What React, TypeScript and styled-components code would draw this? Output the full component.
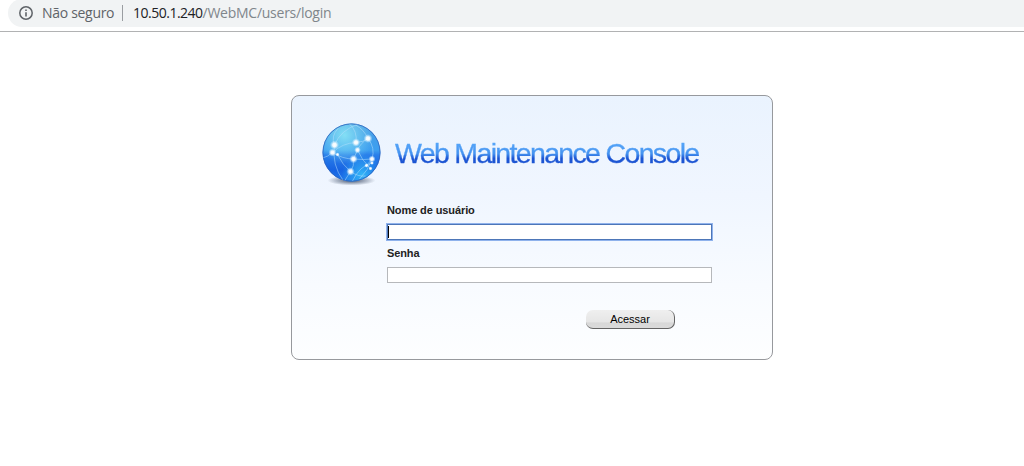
import React from "react";
import styled, { createGlobalStyle } from "styled-components";

const GlobalStyle = createGlobalStyle`
  body {
    margin: 0;
    background: #fff;
    font-family: "Liberation Sans", Arial, sans-serif;
    overflow: hidden;
  }
`;

const Page = styled.div`
  display: flex;
  flex-direction: column;
  height: 466px;
  overflow: hidden;
`;

const BrowserBar = styled.header`
  box-sizing: border-box;
  height: 32px;
  padding-left: 8px;
  border-bottom: 1px solid #b1b2b3;
`;

const AddressField = styled.div`
  display: flex;
  align-items: center;
  box-sizing: border-box;
  height: 28px;
  margin-top: -1px;
  padding-left: 11px;
  border-radius: 14px 0 0 14px;
  background: #f1f3f4;
  font-family: "Open Sans", "Noto Sans", sans-serif;
  font-size: 14px;
  line-height: 28px;
  white-space: nowrap;
`;

const SecurityText = styled.span`
  margin-left: 9px;
  width: 71px;
  color: #5f6368;
  letter-spacing: -0.3px;
`;

const Divider = styled.span`
  width: 1px;
  height: 16px;
  margin: 0 10px 0 9px;
  background: #9a9da1;
`;

const Host = styled.span`
  color: #202124;
  letter-spacing: -0.5px;
`;

const Path = styled.span`
  color: #80868b;
  letter-spacing: -0.26px;
`;

const Main = styled.main`
  padding: 63px 0 0 291px;
`;

const Panel = styled.form`
  box-sizing: border-box;
  width: 482px;
  height: 265px;
  padding: 25px 0 0 29px;
  border: 1px solid #97999d;
  border-radius: 8px;
  background: linear-gradient(#eaf3fe 0%, #f0f6ff 38%, #f8fbff 72%, #fdfeff 100%);
`;

const Brand = styled.div`
  display: flex;
  height: 68px;
`;

const Title = styled.h1`
  margin: 15px 0 0 12px;
  height: 34px;
  font-size: 28.5px;
  line-height: 34px;
  font-weight: 400;
  letter-spacing: -1.66px;
  white-space: nowrap;
  color: transparent;
  -webkit-text-stroke: 0.35px transparent;
  background: linear-gradient(#58a8fa 15%, #4593f0 52%, #1c55d3 66%, #1c55d3 80%, #4a8ded 100%);
  background-clip: text;
  -webkit-background-clip: text;
`;

const Fields = styled.div`
  display: flex;
  flex-direction: column;
  width: 326px;
  margin: 14px 0 0 66px;
`;

const Label = styled.label`
  height: 15px;
  color: #222;
  font-size: 11px;
  font-weight: 700;
  line-height: 15px;
  letter-spacing: -0.1px;
`;

const Field = styled.div<{ $active?: boolean }>`
  display: flex;
  align-items: center;
  box-sizing: border-box;
  width: 325px;
  height: 16px;
  margin: 6px 0 6px;
  border: 1px solid ${(p) => (p.$active ? "#4d76b8" : "#b6b8bb")};
  background: #fff;
  box-shadow: ${(p) => (p.$active ? "0 0 0 1px #8fb2ec" : "none")};
`;

const Caret = styled.span`
  width: 1px;
  height: 12px;
  background: #000;
`;

const SubmitButton = styled.button`
  display: block;
  box-sizing: border-box;
  width: 89px;
  height: 19px;
  margin: 21px 0 0 265px;
  padding: 0;
  border: 0 solid #646464;
  border-width: 0 1px 1px 0;
  border-radius: 7px;
  background: linear-gradient(#efefef 0%, #e6e6e6 65%, #d8d8d8 72%, #dadada 100%);
  color: #000;
  font: 11px/18px "Liberation Sans", Arial, sans-serif;
`;

const InfoIcon = () => (
  <svg width="14" height="14" viewBox="0 0 14 14" fill="none">
    <circle cx="7" cy="7" r="6.2" stroke="#5f6368" strokeWidth="1.5" />
    <path d="M7 6.2v4.3M7 3.4v1.6" stroke="#5f6368" strokeWidth="1.6" />
  </svg>
);

const NODES: [number, number, number][] = [
  [14, 24, 2.6],
  [12, 31.5, 2.3],
  [17, 33.5, 1.2],
  [35.5, 21.5, 2.4],
  [47.5, 17.5, 2.5],
  [37, 29, 1.9],
  [33, 38, 2.4],
  [51.5, 38, 2],
  [51.5, 42, 1.1],
  [46, 44.5, 1.3],
  [50, 47.5, 1.2],
  [30, 50.5, 2.4],
];

const Globe = () => (
  <svg width="62" height="66" viewBox="0.5 0 62 66">
    <defs>
      <linearGradient id="sphere" x1="0" y1="0" x2="0" y2="1">
        <stop offset="0" stopColor="#4a9de4" />
        <stop offset=".46" stopColor="#3d9ff0" />
        <stop offset=".54" stopColor="#2a80ea" />
        <stop offset=".8" stopColor="#1763e2" />
        <stop offset="1" stopColor="#2079ea" />
      </linearGradient>
      <radialGradient id="shine" cx=".38" cy=".2" r=".5">
        <stop offset="0" stopColor="#8ae6f6" stopOpacity=".9" />
        <stop offset="1" stopColor="#8ae6f6" stopOpacity="0" />
      </radialGradient>
      <radialGradient id="lower" cx=".68" cy=".88" r=".35">
        <stop offset="0" stopColor="#37c3fb" stopOpacity=".85" />
        <stop offset="1" stopColor="#37c3fb" stopOpacity="0" />
      </radialGradient>
      <radialGradient id="shadow">
        <stop offset="0" stopColor="#1b2c4a" stopOpacity=".8" />
        <stop offset="1" stopColor="#1b2c4a" stopOpacity="0" />
      </radialGradient>
      <radialGradient id="glow">
        <stop offset="0" stopColor="#fff" />
        <stop offset=".4" stopColor="#fff" stopOpacity=".9" />
        <stop offset="1" stopColor="#bfe8ff" stopOpacity="0" />
      </radialGradient>
      <clipPath id="ball">
        <circle cx="31" cy="31.5" r="28.6" />
      </clipPath>
    </defs>
    <ellipse cx="31" cy="59.5" rx="24" ry="5" fill="url(#shadow)" />
    <circle cx="31" cy="31.5" r="28.9" fill="url(#sphere)" />
    <circle cx="31" cy="31.5" r="28.9" fill="url(#shine)" />
    <circle cx="31" cy="31.5" r="28.9" fill="url(#lower)" />
    <circle cx="31" cy="31.5" r="28.6" fill="none" stroke="#2d62bd" strokeWidth=".8" />
    <g clipPath="url(#ball)" fill="none" stroke="#b9e3fd" strokeOpacity=".55" strokeWidth=".9">
      <path d="M14 24Q20 9 38 3" />
      <path d="M14 24Q10 15 18 7" />
      <path d="M12 31.5Q22 22 35.5 21.5Q43 21 47.5 17.5" />
      <path d="M35.5 21.5Q37 10 29 3" />
      <path d="M47.5 17.5Q43 8 35 4" />
      <path d="M47.5 17.5Q55 27 51.5 38Q48 49 39 58" />
      <path d="M47.5 17.5Q40 22 37 29L33 38" />
      <path d="M14 24Q11 44 23 60" />
      <path d="M12 31.5Q22 38 33 38Q44 39 51.5 38" />
      <path d="M17 33.5Q22 44 30 50.5Q38 56 45 55" />
      <path d="M33 38Q34 45 30 50.5L24 60" />
      <path d="M37 29Q41 39 50 47.5" />
      <path d="M51.5 42Q39 45 32 60" />
      <path d="M46 44.5L51.5 38" />
      <path d="M2 37Q7 36 12 31.5" />
    </g>
    {NODES.map(([x, y, r]) => (
      <circle key={`${x}-${y}`} cx={x} cy={y} r={r * 1.8} fill="url(#glow)" />
    ))}
  </svg>
);

export default function App() {
  return (
    <Page>
      <GlobalStyle />
      <BrowserBar>
        <AddressField>
          <InfoIcon />
          <SecurityText>Não seguro</SecurityText>
          <Divider />
          <Host>10.50.1.240</Host>
          <Path>/WebMC/users/login</Path>
        </AddressField>
      </BrowserBar>
      <Main>
        <Panel>
          <Brand>
            <Globe />
            <Title>Web Maintenance Console</Title>
          </Brand>
          <Fields>
            <Label>Nome de usuário</Label>
            <Field $active>
              <Caret />
            </Field>
            <Label>Senha</Label>
            <Field />
          </Fields>
          <SubmitButton type="button">Acessar</SubmitButton>
        </Panel>
      </Main>
    </Page>
  );
}
